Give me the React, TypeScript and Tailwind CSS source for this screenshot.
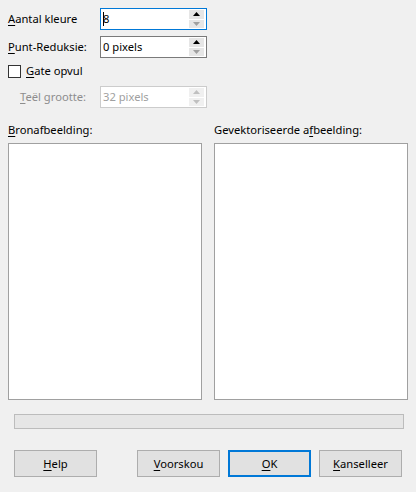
import React from "react";

const U = ({ c }: { c: string }) => <span className="underline underline-offset-[2px] decoration-[1px]">{c}</span>;

function Spin({ value, border, disabled, caret }: { value: string; border: string; disabled?: boolean; caret?: boolean }) {
  return (
    <div className={`w-[107px] h-[22px] border bg-white flex items-center ${border}`}>
      <div className={`flex-1 pl-[2px] flex items-center ${disabled ? "text-[#a0a0a0]" : "text-black"}`}>
        {caret && <span className="w-[1px] h-[14px] bg-black -mr-[1px]" />}
        <span>{value}</span>
      </div>
      <div className="w-[15px] h-full flex flex-col gap-[1px] py-[1px] mr-[2px]">
        <div className={`flex-1 flex items-center justify-center ${disabled ? "bg-[#f0f0f0]" : "bg-[#e6e6e6]"}`}>
          <svg width="7" height="4" viewBox="0 0 7 4"><path d="M0 4 L3.5 0 L7 4 Z" fill={disabled ? "#c0c0c0" : "#000"} /></svg>
        </div>
        <div className={`flex-1 flex items-center justify-center ${disabled ? "bg-[#f0f0f0]" : "bg-[#e6e6e6]"}`}>
          <svg width="7" height="4" viewBox="0 0 7 4"><path d="M0 0 L3.5 4 L7 0 Z" fill={disabled ? "#c0c0c0" : "#a0a0a0"} /></svg>
        </div>
      </div>
    </div>
  );
}

function Btn({ children, primary }: { children: React.ReactNode; primary?: boolean }) {
  return (
    <div
      className={`w-[83px] h-[27px] flex items-center justify-center bg-[#e1e1e1] ${
        primary ? "border-2 border-[#0078d7]" : "border border-[#adadad]"
      }`}
    >
      {children}
    </div>
  );
}

export default function App() {
  return (
    <div
      className="w-[416px] h-[492px] bg-[#f0f0f0] text-[11.2px] leading-[16px] text-black flex flex-col"
      style={{ fontFamily: '"Noto Sans", "Open Sans", sans-serif' }}
    >
      <div className="pl-[8px] pt-[8px] flex flex-col">
        <div className="flex items-center h-[22px]">
          <div className="w-[92px]"><U c="A" />antal kleure</div>
          <Spin value="8" border="border-[#0078d7]" caret />
        </div>
        <div className="flex items-center h-[22px] mt-[6px]">
          <div className="w-[92px]"><U c="P" />unt-Reduksie:</div>
          <Spin value="0 pixels" border="border-[#7a7a7a]" />
        </div>
        <div className="flex items-center h-[20px] mt-[3px]">
          <div className="w-[13px] h-[13px] border border-[#333] bg-white" />
          <div className="ml-[5px]"><U c="G" />ate opvul</div>
        </div>
        <div className="flex items-center h-[22px] mt-[5px]">
          <div className="w-[92px] pl-[12px] text-[#8d8d8d]"><U c="T" />eël grootte:</div>
          <Spin value="32 pixels" border="border-[#cccccc]" disabled />
        </div>
      </div>

      <div className="flex pl-[8px] mt-[14px] gap-[12px]">
        <div className="flex flex-col w-[194px]">
          <div className="h-[16px]"><U c="B" />ronafbeelding:</div>
          <div className="mt-[5px] h-[257px] bg-white border border-[#a0a0a0]" />
        </div>
        <div className="flex flex-col w-[194px]">
          <div className="h-[16px]">Gevektoriseerde a<U c="f" />beelding:</div>
          <div className="mt-[5px] h-[257px] bg-white border border-[#a0a0a0]" />
        </div>
      </div>

      <div className="ml-[14px] mt-[14px] w-[390px] h-[15px] bg-[#e6e6e6] border border-[#bcbcbc]" />

      <div className="flex pl-[14px] mt-[21px]">
        <Btn><span><U c="H" />elp</span></Btn>
        <div className="ml-[40px] flex gap-[8px]">
          <Btn><span><U c="V" />oorskou</span></Btn>
          <Btn primary><span><U c="O" />K</span></Btn>
          <Btn><span><U c="K" />anselleer</span></Btn>
        </div>
      </div>
    </div>
  );
}
